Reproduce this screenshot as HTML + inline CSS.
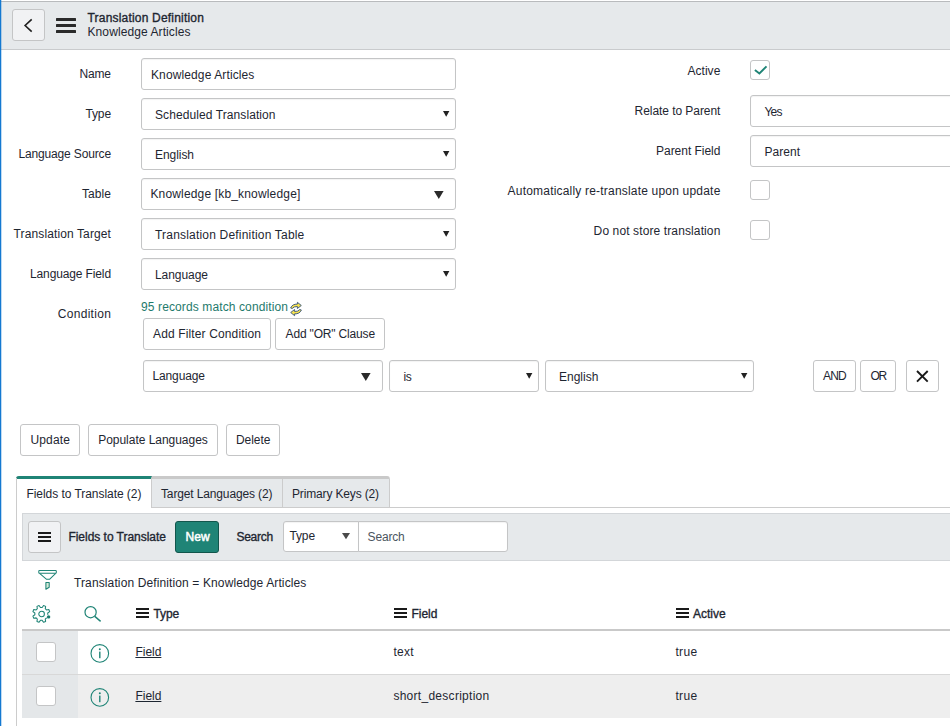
<!DOCTYPE html>
<html lang="en"><head><meta charset="utf-8"><title>Translation Definition | Knowledge Articles</title>
<style>
html,body{margin:0;padding:0;background:#fff;}
body{width:950px;height:726px;position:relative;overflow:hidden;font-family:"Liberation Sans",sans-serif;color:#1e2631;}
.r,.b,.btn,.inp,.chk,.t{position:absolute;box-sizing:border-box;}
.t{margin:0;font-weight:400;line-height:20px;white-space:nowrap;z-index:5;font-size:12px;color:#1e2631;text-decoration:none;}
.btn{border:1px solid #c4c5c6;border-radius:3px;background:#fff;}
.inp{border:1px solid #c4c5c6;border-radius:3px;background:#fff;box-shadow:inset 0 1px 1px rgba(0,0,0,.05);}
.chk{border:1px solid #c4c5c6;border-radius:3px;background:#fff;}
svg{overflow:visible;}
</style></head><body>
<div class="r" style="left:0px;top:1px;width:950px;height:49px;background:#e6e9eb;border-top:1px solid #b9bbbd;border-bottom:1px solid #c9cbcd;box-sizing:border-box;"></div>
<div class="btn" style="left:12px;top:9px;width:33px;height:32px;background:#f1f2f4;"></div>
<svg class="r" style="left:22px;top:16px" width="12" height="18" viewBox="0 0 12 18"><path d="M9.7 3.3 L3.1 9.5 L9.7 15.7" fill="none" stroke="#1f1f1f" stroke-width="1.6"/></svg>
<div class="r" style="left:56px;top:18px;width:20px;height:3px;background:#2a2a2a;border-radius:0.5px;"></div>
<div class="r" style="left:56px;top:24px;width:20px;height:3px;background:#2a2a2a;border-radius:0.5px;"></div>
<div class="r" style="left:56px;top:30px;width:20px;height:3px;background:#2a2a2a;border-radius:0.5px;"></div>
<div class="inp" style="left:141px;top:58px;width:315px;height:32px;"></div>
<div class="inp" style="left:141px;top:98px;width:315px;height:32px;"></div>
<div class="inp" style="left:141px;top:138px;width:315px;height:32px;"></div>
<div class="inp" style="left:141px;top:178px;width:315px;height:32px;"></div>
<div class="inp" style="left:141px;top:218px;width:315px;height:32px;"></div>
<div class="inp" style="left:141px;top:258px;width:315px;height:32px;"></div>
<svg class="r" style="left:443px;top:111px" width="6.4" height="5.8" viewBox="0 0 6.4 5.8"><path d="M0 0 H6.4 L3.2 5.8 Z" fill="#222"/></svg>
<svg class="r" style="left:443px;top:151px" width="6.4" height="5.8" viewBox="0 0 6.4 5.8"><path d="M0 0 H6.4 L3.2 5.8 Z" fill="#222"/></svg>
<svg class="r" style="left:443px;top:231px" width="6.4" height="5.8" viewBox="0 0 6.4 5.8"><path d="M0 0 H6.4 L3.2 5.8 Z" fill="#222"/></svg>
<svg class="r" style="left:443px;top:271px" width="6.4" height="5.8" viewBox="0 0 6.4 5.8"><path d="M0 0 H6.4 L3.2 5.8 Z" fill="#222"/></svg>
<svg class="r" style="left:433.6px;top:191px" width="9.6" height="8" viewBox="0 0 9.6 8"><path d="M0 0 H9.6 L4.8 8 Z" fill="#2b2b2b"/></svg>
<div class="chk" style="left:750px;top:60px;width:20px;height:20px;"></div>
<svg class="r" style="left:753px;top:64px" width="14" height="12" viewBox="0 0 14 12"><path d="M1.9 6.0 L6.4 9.5 L13.5 2.3" fill="none" stroke="#1f8476" stroke-width="1.9"/></svg>
<div class="inp" style="left:750px;top:95px;width:215px;height:32px;"></div>
<div class="inp" style="left:750px;top:135px;width:215px;height:32px;"></div>
<div class="chk" style="left:750px;top:180px;width:20px;height:20px;"></div>
<div class="chk" style="left:750px;top:220px;width:20px;height:20px;"></div>
<svg class="r" style="left:289px;top:301px" width="14" height="16" viewBox="-7 -8 14 16"><g fill="#f7e24d" stroke="#36527c" stroke-width="0.9" stroke-linejoin="round"><path d="M-5.4 -1.0 Q-3.6 -5.1 1.4 -4.9 L1.4 -6.7 L5.3 -3.5 L1.4 -0.5 L1.4 -2.5 Q-2.3 -2.6 -3.8 -0.5 Z"/><path transform="rotate(180)" d="M-5.4 -1.0 Q-3.6 -5.1 1.4 -4.9 L1.4 -6.7 L5.3 -3.5 L1.4 -0.5 L1.4 -2.5 Q-2.3 -2.6 -3.8 -0.5 Z"/></g></svg>
<div class="btn" style="left:143px;top:318px;width:128px;height:32px;"></div>
<div class="btn" style="left:275px;top:318px;width:110px;height:32px;"></div>
<div class="inp" style="left:143px;top:360px;width:240px;height:32px;"></div>
<svg class="r" style="left:361.2px;top:373.2px" width="9.6" height="8" viewBox="0 0 9.6 8"><path d="M0 0 H9.6 L4.8 8 Z" fill="#2b2b2b"/></svg>
<div class="inp" style="left:389px;top:360px;width:150px;height:32px;"></div>
<svg class="r" style="left:526px;top:373px" width="6.4" height="5.8" viewBox="0 0 6.4 5.8"><path d="M0 0 H6.4 L3.2 5.8 Z" fill="#222"/></svg>
<div class="inp" style="left:545px;top:360px;width:209px;height:32px;"></div>
<svg class="r" style="left:741px;top:373px" width="6.4" height="5.8" viewBox="0 0 6.4 5.8"><path d="M0 0 H6.4 L3.2 5.8 Z" fill="#222"/></svg>
<div class="btn" style="left:813px;top:360px;width:43px;height:32px;"></div>
<div class="btn" style="left:860px;top:360px;width:36px;height:32px;"></div>
<div class="btn" style="left:906px;top:360px;width:33px;height:32px;"></div>
<svg class="r" style="left:915px;top:369px" width="15" height="15" viewBox="0 0 15 15"><path d="M2 2 L12.7 12.7 M12.7 2 L2 12.7" fill="none" stroke="#1a1a1a" stroke-width="1.9"/></svg>
<div class="btn" style="left:20px;top:424px;width:60px;height:32px;"></div>
<div class="btn" style="left:88px;top:424px;width:130px;height:32px;"></div>
<div class="btn" style="left:226px;top:424px;width:54px;height:32px;"></div>
<div class="r" style="left:16px;top:476px;width:374px;height:32px;background:#e6e9eb;border-top:3px solid #c9c9c9;border-right:1px solid #ccc;box-sizing:border-box;border-radius:3px 3px 0 0;"></div>
<div class="r" style="left:151px;top:507px;width:799px;height:1px;background:#ccc;"></div>
<div class="r" style="left:282px;top:479px;width:1px;height:28px;background:#ccc;"></div>
<div class="r" style="left:16px;top:476px;width:136px;height:32px;background:#fff;border-top:3px solid #1f8476;border-right:1px solid #ccc;box-sizing:border-box;border-radius:3px 0 0 0;"></div>
<div class="r" style="left:16px;top:478px;width:1px;height:260px;background:#ccc;"></div>
<div class="r" style="left:22px;top:513px;width:940px;height:48px;background:#e6e9eb;border:1px solid #d3d6d9;box-sizing:border-box;"></div>
<div class="btn" style="left:28px;top:521px;width:33px;height:32px;background:#f1f2f4;"></div>
<div class="r" style="left:38px;top:532px;width:13.2px;height:2.2px;background:#1a1a1a;"></div>
<div class="r" style="left:38px;top:536px;width:13.2px;height:2.2px;background:#1a1a1a;"></div>
<div class="r" style="left:38px;top:540px;width:13.2px;height:2.2px;background:#1a1a1a;"></div>
<div class="r" style="left:175px;top:521px;width:44px;height:32px;background:#1f8476;border:1px solid #12564c;border-radius:3px;box-sizing:border-box;"></div>
<div class="inp" style="left:283px;top:521px;width:76px;height:31px;border-radius:3px 0 0 3px;"></div>
<svg class="r" style="left:341.8px;top:533.2px" width="8" height="6.2" viewBox="0 0 8 6.2"><path d="M0 0 H8 L4.0 6.2 Z" fill="#4a4a4a"/></svg>
<div class="inp" style="left:358px;top:521px;width:150px;height:31px;border-radius:0 3px 3px 0;"></div>
<svg class="r" style="left:37px;top:569px" width="21" height="22" viewBox="0 0 21 22"><g fill="none" stroke="#1f8476" stroke-width="1.05" stroke-linejoin="round"><rect x="1.8" y="1.4" width="17.5" height="2.9" rx="0.7"/><path d="M2.6 4.4 L9.6 10.3 H12.5 L18.7 4.4"/><path d="M8.9 13.4 H12.2 V18.2 L8.9 20.2 Z" fill="#d5ecd9"/></g></svg>
<svg class="r" style="left:32px;top:604px" width="20" height="20" viewBox="0 0 20 20"><g fill="none" stroke="#1f8476" stroke-width="1.05" stroke-linejoin="round"><path d="M10.15 3.46 L11.55 1.50 L13.65 2.37 L13.26 4.74 L14.46 5.94 L16.83 5.55 L17.70 7.65 L15.74 9.05 L15.74 10.75 L17.70 12.15 L16.83 14.25 L14.46 13.86 L13.26 15.06 L13.65 17.43 L11.55 18.30 L10.15 16.34 L8.45 16.34 L7.05 18.30 L4.95 17.43 L5.34 15.06 L4.14 13.86 L1.77 14.25 L0.90 12.15 L2.86 10.75 L2.86 9.05 L0.90 7.65 L1.77 5.55 L4.14 5.94 L5.34 4.74 L4.95 2.37 L7.05 1.50 L8.45 3.46 Z"/><circle cx="9.60" cy="10.00" r="2.8"/></g><circle cx="16.6" cy="12.9" r="2.3" fill="#fff"/><circle cx="16.6" cy="12.9" r="1.7" fill="#1a7a6d"/></svg>
<svg class="r" style="left:83px;top:605.2px" width="20" height="18" viewBox="0 0 20 18"><circle cx="7.6" cy="7.2" r="5.6" fill="none" stroke="#1f8476" stroke-width="1.2"/><path d="M11.8 11.4 L17.6 16.4" stroke="#1f8476" stroke-width="1.4" fill="none"/></svg>
<div class="r" style="left:136px;top:608px;width:13.4px;height:1.8px;background:#1a1a1a;"></div>
<div class="r" style="left:136px;top:612px;width:13.4px;height:1.8px;background:#1a1a1a;"></div>
<div class="r" style="left:136px;top:616.1px;width:13.4px;height:1.8px;background:#1a1a1a;"></div>
<div class="r" style="left:393.6px;top:608px;width:13.4px;height:1.8px;background:#1a1a1a;"></div>
<div class="r" style="left:393.6px;top:612px;width:13.4px;height:1.8px;background:#1a1a1a;"></div>
<div class="r" style="left:393.6px;top:616.1px;width:13.4px;height:1.8px;background:#1a1a1a;"></div>
<div class="r" style="left:675.6px;top:608px;width:13.4px;height:1.8px;background:#1a1a1a;"></div>
<div class="r" style="left:675.6px;top:612px;width:13.4px;height:1.8px;background:#1a1a1a;"></div>
<div class="r" style="left:675.6px;top:616.1px;width:13.4px;height:1.8px;background:#1a1a1a;"></div>
<div class="r" style="left:22px;top:629px;width:940px;height:2px;background:#c9c9c9;"></div>
<div class="r" style="left:22px;top:631px;width:56px;height:43px;background:#e6e9eb;"></div>
<div class="r" style="left:22px;top:674px;width:940px;height:1px;background:#d8d8d8;"></div>
<div class="r" style="left:22px;top:675px;width:940px;height:43px;background:#eeeeee;"></div>
<div class="r" style="left:22px;top:675px;width:56px;height:43px;background:#e4e7e9;"></div>
<div class="chk" style="left:36px;top:642px;width:20px;height:20px;"></div>
<div class="chk" style="left:36px;top:686px;width:20px;height:20px;"></div>
<svg class="r" style="left:89.5px;top:643.9px" width="20" height="20" viewBox="0 0 20 20"><circle cx="9.8" cy="9.4" r="8.8" fill="none" stroke="#1f8476" stroke-width="1.1"/><rect x="9.1" y="7.6" width="1.4" height="6.6" fill="#1f8476"/><circle cx="9.8" cy="5.3" r="1" fill="#1f8476"/></svg>
<svg class="r" style="left:89.5px;top:687.9px" width="20" height="20" viewBox="0 0 20 20"><circle cx="9.8" cy="9.4" r="8.8" fill="none" stroke="#1f8476" stroke-width="1.1"/><rect x="9.1" y="7.6" width="1.4" height="6.6" fill="#1f8476"/><circle cx="9.8" cy="5.3" r="1" fill="#1f8476"/></svg>
<div class="r" style="left:0px;top:0px;width:1px;height:726px;background:#1479d1;"></div>
<div class="r" style="left:1px;top:0px;width:1px;height:726px;background:rgba(20,121,209,.28);"></div>
<h1 class="t" id="t0" style="left:87.50px;top:8.44px;font-size:12px;letter-spacing:0.196px;-webkit-text-stroke:0.35px currentColor;">Translation Definition</h1>
<h2 class="t" id="t1" style="left:87.50px;top:21.94px;font-size:12px;letter-spacing:0.092px;">Knowledge Articles</h2>
<label class="t" id="t2" style="left:79.40px;top:63.64px;font-size:12px;letter-spacing:-0.119px;">Name</label>
<label class="t" id="t3" style="left:85.40px;top:103.64px;font-size:12px;letter-spacing:-0.119px;">Type</label>
<label class="t" id="t4" style="left:18.40px;top:143.64px;font-size:12px;letter-spacing:-0.148px;">Language Source</label>
<label class="t" id="t5" style="left:82.00px;top:183.64px;font-size:12px;letter-spacing:0.069px;">Table</label>
<label class="t" id="t6" style="left:13.60px;top:223.64px;font-size:12px;letter-spacing:0.115px;">Translation Target</label>
<label class="t" id="t7" style="left:30.00px;top:263.64px;font-size:12px;letter-spacing:-0.128px;">Language Field</label>
<label class="t" id="t8" style="left:57.80px;top:303.64px;font-size:12px;letter-spacing:0.294px;">Condition</label>
<label class="t" id="t9" style="left:687.40px;top:60.64px;font-size:12px;letter-spacing:0.057px;">Active</label>
<label class="t" id="t10" style="left:634.60px;top:100.64px;font-size:12px;letter-spacing:-0.059px;">Relate to Parent</label>
<label class="t" id="t11" style="left:656.00px;top:140.64px;font-size:12px;letter-spacing:-0.026px;">Parent Field</label>
<label class="t" id="t12" style="left:507.60px;top:180.64px;font-size:12px;letter-spacing:0.196px;">Automatically re-translate upon update</label>
<label class="t" id="t13" style="left:593.60px;top:220.64px;font-size:12px;letter-spacing:0.116px;">Do not store translation</label>
<span class="t" id="t14" style="left:151.00px;top:64.84px;font-size:12px;letter-spacing:0.115px;">Knowledge Articles</span>
<span class="t" id="t15" style="left:155.00px;top:104.84px;font-size:12px;letter-spacing:0.090px;">Scheduled Translation</span>
<span class="t" id="t16" style="left:155.00px;top:144.84px;font-size:12px;letter-spacing:-0.055px;">English</span>
<span class="t" id="t17" style="left:150.40px;top:183.84px;font-size:12px;letter-spacing:0.166px;">Knowledge [kb_knowledge]</span>
<span class="t" id="t18" style="left:155.00px;top:224.84px;font-size:12px;letter-spacing:0.193px;">Translation Definition Table</span>
<span class="t" id="t19" style="left:155.00px;top:264.84px;font-size:12px;letter-spacing:-0.052px;">Language</span>
<span class="t" id="t20" style="left:764.40px;top:101.84px;font-size:12px;letter-spacing:-0.791px;">Yes</span>
<span class="t" id="t21" style="left:764.40px;top:141.84px;font-size:12px;letter-spacing:0.044px;">Parent</span>
<a class="t" id="t22" style="left:141.00px;top:297.04px;font-size:12px;color:#1f7a6c;letter-spacing:0.115px;">95 records match condition</a>
<span class="t" id="t23" style="left:153.00px;top:323.84px;font-size:12px;letter-spacing:0.134px;">Add Filter Condition</span>
<span class="t" id="t24" style="left:285.60px;top:323.84px;font-size:12px;letter-spacing:-0.173px;">Add &quot;OR&quot; Clause</span>
<span class="t" id="t25" style="left:152.40px;top:366.14px;font-size:12px;letter-spacing:-0.105px;">Language</span>
<span class="t" id="t26" style="left:403.60px;top:366.84px;font-size:12px;letter-spacing:-0.448px;">is</span>
<span class="t" id="t27" style="left:559.00px;top:366.84px;font-size:12px;letter-spacing:0.006px;">English</span>
<span class="t" id="t28" style="left:823.00px;top:366.14px;font-size:12px;letter-spacing:-0.778px;">AND</span>
<span class="t" id="t29" style="left:870.60px;top:366.14px;font-size:12px;letter-spacing:-1.467px;">OR</span>
<span class="t" id="t30" style="left:30.40px;top:429.84px;font-size:12px;letter-spacing:0.163px;">Update</span>
<span class="t" id="t31" style="left:98.20px;top:429.84px;font-size:12px;letter-spacing:-0.029px;">Populate Languages</span>
<span class="t" id="t32" style="left:236.00px;top:429.84px;font-size:12px;letter-spacing:-0.052px;">Delete</span>
<span class="t" id="t33" style="left:26.40px;top:484.14px;font-size:12px;letter-spacing:-0.047px;">Fields to Translate (2)</span>
<span class="t" id="t34" style="left:161.00px;top:484.14px;font-size:12px;letter-spacing:-0.137px;">Target Languages (2)</span>
<span class="t" id="t35" style="left:292.00px;top:484.14px;font-size:12px;letter-spacing:-0.151px;">Primary Keys (2)</span>
<span class="t" id="t36" style="left:68.40px;top:527.34px;font-size:12px;letter-spacing:-0.024px;-webkit-text-stroke:0.35px currentColor;">Fields to Translate</span>
<span class="t" id="t37" style="left:185.60px;top:527.34px;font-size:12px;color:#fff;letter-spacing:-0.006px;-webkit-text-stroke:0.5px currentColor;">New</span>
<span class="t" id="t38" style="left:236.40px;top:527.34px;font-size:12px;letter-spacing:-0.260px;-webkit-text-stroke:0.35px currentColor;">Search</span>
<span class="t" id="t39" style="left:289.40px;top:525.84px;font-size:12px;letter-spacing:-0.119px;">Type</span>
<span class="t" id="t40" style="left:367.60px;top:527.14px;font-size:12px;color:#4c5560;letter-spacing:-0.188px;">Search</span>
<span class="t" id="t41" style="left:74.00px;top:572.84px;font-size:12px;letter-spacing:0.119px;">Translation Definition = Knowledge Articles</span>
<span class="t" id="t42" style="left:153.60px;top:603.84px;font-size:12px;letter-spacing:-0.176px;-webkit-text-stroke:0.35px currentColor;">Type</span>
<span class="t" id="t43" style="left:411.40px;top:603.84px;font-size:12px;letter-spacing:-0.003px;-webkit-text-stroke:0.35px currentColor;">Field</span>
<span class="t" id="t44" style="left:693.00px;top:603.84px;font-size:12px;letter-spacing:-0.016px;-webkit-text-stroke:0.35px currentColor;">Active</span>
<a class="t" id="t45" style="left:135.40px;top:641.84px;font-size:12px;letter-spacing:-0.003px;text-decoration:underline;">Field</a>
<span class="t" id="t46" style="left:393.40px;top:641.84px;font-size:12px;letter-spacing:0.245px;">text</span>
<span class="t" id="t47" style="left:675.40px;top:641.84px;font-size:12px;letter-spacing:0.375px;">true</span>
<a class="t" id="t48" style="left:135.40px;top:685.84px;font-size:12px;letter-spacing:-0.003px;text-decoration:underline;">Field</a>
<span class="t" id="t49" style="left:393.40px;top:685.84px;font-size:12px;letter-spacing:0.279px;">short_description</span>
<span class="t" id="t50" style="left:675.40px;top:685.84px;font-size:12px;letter-spacing:0.375px;">true</span>
</body></html>
